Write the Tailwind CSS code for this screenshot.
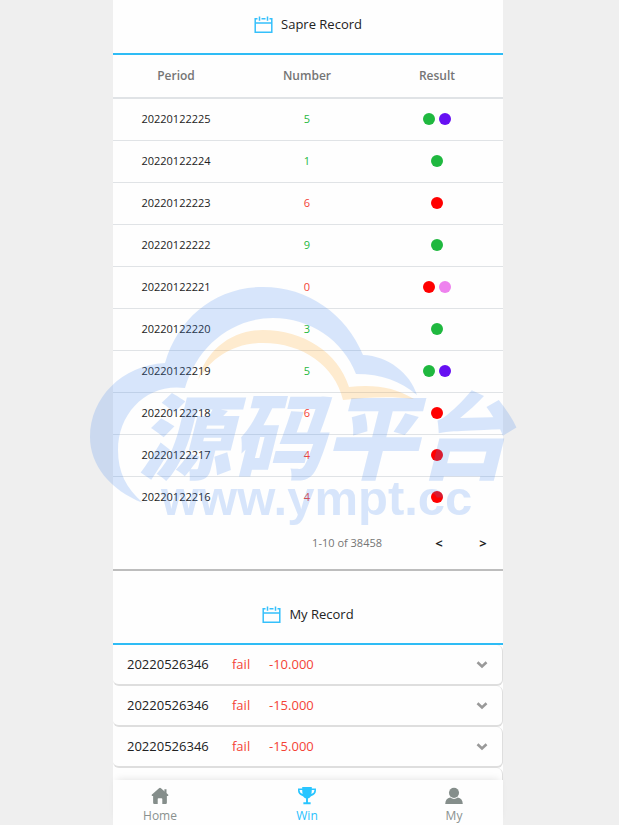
<!DOCTYPE html>
<html lang="en">

<head>
    <meta charset="UTF-8">
    <meta name="viewport" content="width=device-width, initial-scale=1.0">
    <title>Win</title>
    <script src="https://cdn.jsdelivr.net/npm/@tailwindcss/browser@4"></script>
</head>

<body class="bg-[#efefef] font-['Open_Sans','Noto_Sans',sans-serif] text-[#222]">
    <div class="relative flex h-screen justify-center overflow-hidden pr-[3px]">
        <div class="relative flex h-full w-full max-w-[390px] flex-col bg-[#fefefe]">
            <main class="min-h-0 flex-1 overflow-y-auto [scrollbar-width:none]">

                <!-- Sapre Record -->
                <section class="border-b-2 border-[#bdbdbd]">
                    <h2 class="flex h-[55px] items-center justify-center gap-2 border-b-2 border-[#2ebcf5] pb-1 text-[13px]">
                        <svg class="h-[18px] w-[19px]" viewBox="0 0 19 18" fill="none" stroke="#35c0fb" stroke-width="1.5">
                            <path d="M3.5 2.7H1.2V16.3H17.8V2.7H15.5M7.5 2.7H11.5M1.2 7H17.8M5.5 0.5V4.7M13.5 0.5V4.7" />
                        </svg>
                        Sapre Record
                    </h2>
                    <table class="w-full table-fixed text-center text-[11px]">
                        <thead>
                            <tr class="h-[43px] border-b-2 border-[#e0e3e6] text-[12px] text-[#757575]">
                                <th class="pr-1 font-semibold">Period</th>
                                <th class="pr-0.5 font-semibold">Number</th>
                                <th class="pr-0.5 font-semibold">Result</th>
                            </tr>
                        </thead>
                        <tbody id="records"></tbody>
                    </table>
                    <div class="flex h-[51px] items-center justify-end text-[11px]">
                        <span class="mr-[37px] text-[#757575]">1-10 of 38458</span>
                        <button class="mr-1 w-10 text-[13px] font-bold" aria-label="Previous page">&lt;</button>
                        <button class="w-10 text-[13px] font-bold" aria-label="Next page">&gt;</button>
                    </div>
                </section>

                <!-- My Record -->
                <section>
                    <h2 class="flex h-[74px] items-center justify-center gap-2 border-b-2 border-[#2ebcf5] pt-4 text-[13px]">
                        <svg class="h-[18px] w-[19px]" viewBox="0 0 19 18" fill="none" stroke="#35c0fb" stroke-width="1.5">
                            <path d="M3.5 2.7H1.2V16.3H17.8V2.7H15.5M7.5 2.7H11.5M1.2 7H17.8M5.5 0.5V4.7M13.5 0.5V4.7" />
                        </svg>
                        My Record
                    </h2>
                    <div id="myRecords"></div>
                </section>
            </main>

            <nav class="z-10 flex h-[45px] shrink-0 justify-between bg-[#fefefe] pt-1.5 pr-[27px] pl-[25px] text-[12px] text-[#8a918f] shadow-[0_-4px_8px_-4px_rgba(0,0,0,0.12)]">
                <a href="#home" class="flex w-11 flex-col items-center">
                    <svg class="h-[22px] w-5" viewBox="0 0 20 22" fill="#858e8b">
                        <path d="M10 1.8Q10.5 1.8 11 2.3L18.7 9.2Q19 10.4 18 10.5H17.2V17.5Q17.2 18.8 16 18.8H12.4V13.6Q12.4 12.8 11.6 12.8H8.4Q7.6 12.8 7.6 13.6V18.8H4Q2.8 18.8 2.8 17.5V10.5H2Q1 10.4 1.3 9.2L9 2.3Q9.5 1.8 10 1.8Z" />
                        <path d="M14.6 3.4H16.8V8H14.6Z" />
                    </svg>
                    <span class="leading-[18px]">Home</span>
                </a>
                <a href="#win" class="flex w-11 flex-col items-center text-[#29c1fd]">
                    <svg class="h-[22px] w-5" viewBox="0 0 20 22" fill="#29c5ff">
                        <path fill-rule="evenodd" d="M5 1H15V2.5H19.4V5Q19.4 9 14.2 10.7Q12.8 12.8 11 13.2V17H13.8V19.2H6.2V17H9V13.2Q7.2 12.8 5.8 10.7Q0.6 9 0.6 5V2.5H5ZM2.3 4.1V5Q2.4 7.3 5.4 8.5Q5 6.5 5 4.1ZM17.7 4.1H15Q15 6.5 14.6 8.5Q17.6 7.3 17.7 5Z" />
                    </svg>
                    <span class="leading-[18px]">Win</span>
                </a>
                <a href="#my" class="flex w-11 flex-col items-center">
                    <svg class="h-[22px] w-5" viewBox="0 0 20 22" fill="#858e8b">
                        <circle cx="10" cy="7.2" r="5.3" />
                        <path d="M0.8 18.8Q1 13 6 12Q10 15 14 12Q19 13 19.2 18.8Z" />
                    </svg>
                    <span class="leading-[18px]">My</span>
                </a>
            </nav>

            <!-- Watermark -->
            <svg class="pointer-events-none absolute top-[285px] -left-[23px] z-20 h-[245px] w-[432px]" viewBox="90 285 432 245">
                <g fill="#4087f0" opacity="0.2">
                    <path d="M143 503C110 490 90 465 90 437C90 398 122 365 165 363C178 318 215 287 263 287C308 287 346 314 363 355C388 356 410 373 417 395C400 381 382 374 356 374C343 340 310 318 273 318C232 318 197 346 185 388C147 383 118 413 118 450C118 472 126 488 143 503Z" />
                    <text x="138" y="472" font-size="93" font-weight="900" font-style="italic" font-family="'Noto Sans CJK SC', sans-serif">源码平台</text>
                    <text x="161" y="515" font-size="49" font-weight="700" font-family="'Liberation Sans', sans-serif">www.ympt.cc</text>
                </g>
                <path fill="#ff9f14" opacity="0.2" d="M198 380C206 350 232 330 263 330C303 330 338 352 349 387C373 384 395 387 414 399C392 396 368 397 343 400C335 366 303 343 263 343C234 343 212 357 198 380Z" />
            </svg>
        </div>
    </div>

    <script>
        const green = "bg-[#1fb83f]";
        const red = "bg-[#ff0000]";
        const indigo = "bg-[#6610f2]";
        const violet = "bg-[#ee82ee]";

        const records = [
            { period: "20220122225", number: 5, dots: [green, indigo] },
            { period: "20220122224", number: 1, dots: [green] },
            { period: "20220122223", number: 6, dots: [red] },
            { period: "20220122222", number: 9, dots: [green] },
            { period: "20220122221", number: 0, dots: [red, violet] },
            { period: "20220122220", number: 3, dots: [green] },
            { period: "20220122219", number: 5, dots: [green, indigo] },
            { period: "20220122218", number: 6, dots: [red] },
            { period: "20220122217", number: 4, dots: [red] },
            { period: "20220122216", number: 4, dots: [red] },
        ];

        document.getElementById("records").innerHTML = records.map(r => `
            <tr class="h-[42px] border-b border-[#e0e3e6] last:border-b-0">
                <td class="pr-1">${r.period}</td>
                <td class="pr-0.5 ${r.number % 2 ? "text-[#1fb83f]" : "text-[#f44336]"}">${r.number}</td>
                <td class="pr-0.5">
                    <div class="flex justify-center gap-1">
                        ${r.dots.map(c => `<span class="h-3 w-3 rounded-full ${c}"></span>`).join("")}
                    </div>
                </td>
            </tr>
        `).join("");

        const myRecords = ["-10.000", "-15.000", "-15.000", "-15.000"];

        document.getElementById("myRecords").innerHTML = myRecords.map(amount => `
            <button class="flex h-[41px] w-full items-center rounded-md border-r border-b-2 border-[#dedede] px-3.5 text-[13px]">
                <span class="w-[105px] text-left">20220526346</span>
                <span class="w-[37px] text-left text-[#f44336]">fail</span>
                <span class="text-[#f44336]">${amount}</span>
                <svg class="ml-auto h-2 w-3" viewBox="0 0 12 8" fill="none" stroke="#999" stroke-width="2.6">
                    <path d="M1.5 1.3L6 5.5L10.5 1.3" />
                </svg>
            </button>
        `).join("");
    </script>
</body>

</html>
